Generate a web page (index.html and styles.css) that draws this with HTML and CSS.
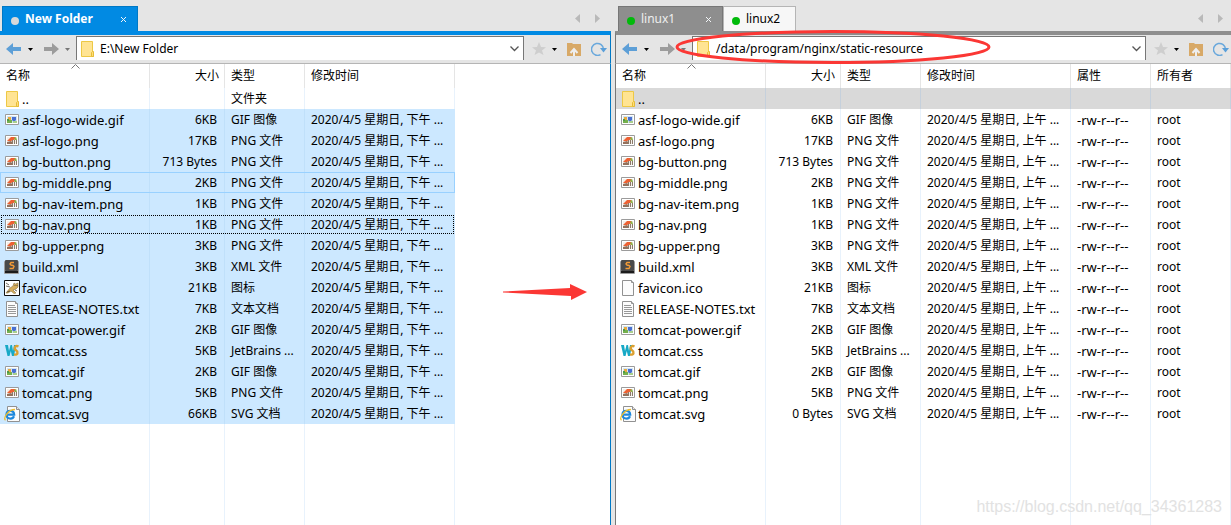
FILE: index.html
```html
<!DOCTYPE html>
<html lang="zh-CN">
<head>
<meta charset="utf-8">
<title>New Folder</title>
<link rel="stylesheet" href="styles.css">
</head>
<body>
<svg class="sprite" aria-hidden="true">
  <symbol id="folder" viewBox="-1 0 16 16"><path d="M1.500.5h11v12h1v3h-12z" fill="#ffe493" stroke="#edc845"/><path d="M11.500 15.500v-4l1-1h1v5z" fill="#ffdd78" stroke="#e6bd38"/></symbol>
  <symbol id="gif" viewBox="-1 0 16 16"><path d="M.5 2.500h13v10H.5z" fill="#fff" stroke="#9b9b9b"/><path d="M2 4h10v7H2z" fill="#cfe4f3"/><path d="M2 8h5v3H2z" fill="#76b04e"/><path d="M3 5h3v3H3z" fill="#e8a93c"/><path d="M2 7h2v2H2z" fill="#4d9a48"/><path d="M7 5h4v3l-2 2-2-2z" fill="#4a6fd0"/><path d="M8 9h4v2H8z" fill="#a9cf8c"/></symbol>
  <symbol id="png" viewBox="-1 0 16 16"><path d="M.5 2.500h13v10H.5z" fill="#fff" stroke="#9b9b9b"/><path d="M2 4h10v7H2z" fill="#f3eee8"/><path d="M2 8l4-4h4l1 2-5 2z" fill="#ed6032"/><path d="M2 9l4-1 1 1v2H2z" fill="#94705b"/><path d="M7 7h1v4H7zM9 7h1v4H9zM11 7h1v4h-1z" fill="#8a7a6a"/><path d="M9 5l2-1 1 3h-2z" fill="#8bb247"/></symbol>
  <symbol id="xml" viewBox="0 0 16 16"><rect x="0" y="2" width="15" height="13" rx="1" fill="#9c9c9c"/><rect x="1" y="1" width="13" height="11" rx="1" fill="#4a4a4a"/><path d="M1 12h13v2H1z" fill="#1c1c1c"/><path d="M10 3.500H7L6 5l1 1 2 .5 1 1-1 2H5.500" fill="none" stroke="#f49b36" stroke-width="1.400"/></symbol>
  <symbol id="cat" viewBox="0 0 16 16"><path d="M.5.5h15v15H.5z" fill="#fff" stroke="#111"/><path d="M2 13l4-5 3-2 1-3 1.500 1L14 3v4l-2 2-3 1 3 3-2 .5L7 11l-3 2z" fill="#d6ad5c" stroke="#8c7548" stroke-width=".6"/><path d="M2 3l3 2M2 6l4 1M3 12l3-1M10.500 5.500h1M12.500 5.500h1M13 11l-2-1" stroke="#4c463a" stroke-width=".8"/></symbol>
  <symbol id="blank" viewBox="-1 0 16 16"><path d="M1.500.5h9l2 2v13h-11z" fill="#fcfcfc" stroke="#919191"/><path d="M10.500.5v2h2" fill="#e7e7e7" stroke="#919191"/></symbol>
  <symbol id="text" viewBox="-1 0 16 16"><path d="M1.500.5h9l2 2v13h-11z" fill="#fcfcfc" stroke="#919191"/><path d="M10.500.5v2h2" fill="#e7e7e7" stroke="#919191"/><path d="M3 4.500h7M3 6.500h8M3 8.500h8M3 10.500h8M3 12.500h8" stroke="#999"/></symbol>
  <symbol id="css" viewBox="-1 0 16 16"><path d="M0 2h3l1 6 1.500-6H7l1 6 1-6h2L9 13H7L5.800 8 4.500 13h-2z" fill="#17a9c6"/><path d="M13.500 3.500C9.500 1.500 9 6 11 7.300S13.500 12.500 9 11.500" fill="none" stroke="#dba030" stroke-width="2.400"/></symbol>
  <symbol id="ie" viewBox="0 0 16 16"><path d="M3.500.5h9l3 3v12h-12z" fill="#fcfcfc" stroke="#919191"/><path d="M12.500.5v3h3" fill="#e7e7e7" stroke="#919191"/><path d="M10 10.300c-1.500 3.500-7.500 3-7.500-1.800s7.500-5 7.700.2H4" fill="none" stroke="#1e88dc" stroke-width="2.200"/><path d="M1.500 14.300C-1 12 4 3.500 11 3.500" fill="none" stroke="#f0bf2c" stroke-width="1.300"/></symbol>
  <symbol id="back" viewBox="0 0 16 14"><path d="M0 7l7-6v4h8v4H7v4z" fill="#5d9fd7"/></symbol>
  <symbol id="next" viewBox="0 0 16 14"><path d="M16 7L9 1v4H1v4h8v4z" fill="#9c9c9c"/></symbol>
  <symbol id="down" viewBox="0 0 5 3"><path d="M0 0h5L2.500 3z" fill="currentColor"/></symbol>
  <symbol id="star" viewBox="0 0 14 14"><path d="M7 0l2 5 5 .3-4 3.200L11.500 13 7 10.500 2.500 13 4 8.500 0 5.300 5 5z" fill="#cecece"/></symbol>
  <symbol id="up" viewBox="0 0 14 13"><path d="M0 0h5l1 1h8v12H0z" fill="#d8a967"/><path d="M3.500 10L7 6l3.500 4M7 7v6" fill="none" stroke="#eee" stroke-width="2"/></symbol>
  <symbol id="refresh" viewBox="0 0 16 14"><path d="M9.500 12.600A6 6 0 1 1 12.500 7" fill="none" stroke="#69a8dc" stroke-width="1.500"/><path d="M9 6h7l-3.500 4.500z" fill="#5a9fd9"/></symbol>
  <symbol id="close" viewBox="0 0 7 7"><path d="M1 1l5 5M6 1L1 6" fill="none" stroke="#f3f6f8"/></symbol>
  <symbol id="left" viewBox="0 0 5 9"><path d="M5 0v9L0 4.500z" fill="#b9b9b9"/></symbol>
  <symbol id="right" viewBox="0 0 5 9"><path d="M0 0v9l5-4.500z" fill="#b9b9b9"/></symbol>
  <symbol id="chevron" viewBox="0 0 9 6"><path d="M.5.5l4 4 4-4" fill="none" stroke="#555" stroke-width="1.300"/></symbol>
  <symbol id="sort" viewBox="0 0 9 5"><path d="M.5 4.500l4-4 4 4" fill="none" stroke="#777"/></symbol>
</svg>

<main class="panes">
<section class="pane local">
  <div class="tabs">
    <div class="tab current"><span class="dot"></span><button class="label">New Folder</button><button class="close" aria-label="Close"><svg><use href="#close"/></svg></button></div>
    <div class="scroll"><button aria-label="Previous tab"><svg><use href="#left"/></svg></button><button aria-label="Next tab"><svg><use href="#right"/></svg></button></div>
  </div>
  <div class="toolbar">
    <button class="nav" aria-label="Back"><svg><use href="#back"/></svg></button><button class="drop" aria-label="Back history"><svg><use href="#down"/></svg></button>
    <button class="nav" aria-label="Forward"><svg><use href="#next"/></svg></button><button class="drop faint" aria-label="Forward history"><svg><use href="#down"/></svg></button>
    <div class="address"><svg class="icon"><use href="#folder"/></svg><input type="text" aria-label="Local path" value="E:\New Folder"><button class="open" aria-label="Show paths"><svg><use href="#chevron"/></svg></button></div>
    <button class="star" aria-label="Bookmarks"><svg><use href="#star"/></svg></button><button class="drop" aria-label="Bookmark list"><svg><use href="#down"/></svg></button>
    <button class="up" aria-label="Parent folder"><svg><use href="#up"/></svg></button><button class="refresh" aria-label="Refresh"><svg><use href="#refresh"/></svg></button>
  </div>
  <div class="list">
  <table>
    <colgroup><col class="c-name"><col class="c-size"><col class="c-type"><col class="c-date"></colgroup>
    <thead><tr><th>名称<svg class="sort"><use href="#sort"/></svg></th><th class="num">大小</th><th>类型</th><th>修改时间</th></tr></thead>
    <tbody>
    <tr><td class="name"><svg class="icon"><use href="#folder"/></svg>..</td><td class="num"></td><td>文件夹</td><td></td></tr>
    <tr class="sel"><td class="name"><svg class="icon"><use href="#gif"/></svg>asf-logo-wide.gif</td><td class="num">6KB</td><td>GIF 图像</td><td>2020/4/5 星期日, 下午 ...</td></tr>
    <tr class="sel"><td class="name"><svg class="icon"><use href="#png"/></svg>asf-logo.png</td><td class="num">17KB</td><td>PNG 文件</td><td>2020/4/5 星期日, 下午 ...</td></tr>
    <tr class="sel"><td class="name"><svg class="icon"><use href="#png"/></svg>bg-button.png</td><td class="num">713 Bytes</td><td>PNG 文件</td><td>2020/4/5 星期日, 下午 ...</td></tr>
    <tr class="sel hover"><td class="name"><svg class="icon"><use href="#png"/></svg>bg-middle.png</td><td class="num">2KB</td><td>PNG 文件</td><td>2020/4/5 星期日, 下午 ...</td></tr>
    <tr class="sel"><td class="name"><svg class="icon"><use href="#png"/></svg>bg-nav-item.png</td><td class="num">1KB</td><td>PNG 文件</td><td>2020/4/5 星期日, 下午 ...</td></tr>
    <tr class="sel focus"><td class="name"><svg class="icon"><use href="#png"/></svg>bg-nav.png</td><td class="num">1KB</td><td>PNG 文件</td><td>2020/4/5 星期日, 下午 ...</td></tr>
    <tr class="sel"><td class="name"><svg class="icon"><use href="#png"/></svg>bg-upper.png</td><td class="num">3KB</td><td>PNG 文件</td><td>2020/4/5 星期日, 下午 ...</td></tr>
    <tr class="sel"><td class="name"><svg class="icon"><use href="#xml"/></svg>build.xml</td><td class="num">3KB</td><td>XML 文件</td><td>2020/4/5 星期日, 下午 ...</td></tr>
    <tr class="sel"><td class="name"><svg class="icon"><use href="#cat"/></svg>favicon.ico</td><td class="num">21KB</td><td>图标</td><td>2020/4/5 星期日, 下午 ...</td></tr>
    <tr class="sel"><td class="name"><svg class="icon"><use href="#text"/></svg>RELEASE-NOTES.txt</td><td class="num">7KB</td><td>文本文档</td><td>2020/4/5 星期日, 下午 ...</td></tr>
    <tr class="sel"><td class="name"><svg class="icon"><use href="#gif"/></svg>tomcat-power.gif</td><td class="num">2KB</td><td>GIF 图像</td><td>2020/4/5 星期日, 下午 ...</td></tr>
    <tr class="sel"><td class="name"><svg class="icon"><use href="#css"/></svg>tomcat.css</td><td class="num">5KB</td><td>JetBrains ...</td><td>2020/4/5 星期日, 下午 ...</td></tr>
    <tr class="sel"><td class="name"><svg class="icon"><use href="#gif"/></svg>tomcat.gif</td><td class="num">2KB</td><td>GIF 图像</td><td>2020/4/5 星期日, 下午 ...</td></tr>
    <tr class="sel"><td class="name"><svg class="icon"><use href="#png"/></svg>tomcat.png</td><td class="num">5KB</td><td>PNG 文件</td><td>2020/4/5 星期日, 下午 ...</td></tr>
    <tr class="sel"><td class="name"><svg class="icon"><use href="#ie"/></svg>tomcat.svg</td><td class="num">66KB</td><td>SVG 文档</td><td>2020/4/5 星期日, 下午 ...</td></tr>
    <tr class="rest"><td></td><td></td><td></td><td></td></tr>
    </tbody>
  </table>
  </div>
  <svg class="arrow" viewBox="0 0 84 18" aria-hidden="true"><path d="M0 8.500L67 5V1l17 8-16 8v-4L0 9.500z" fill="#fb3734"/></svg>
</section>

<section class="pane remote">
  <div class="tabs">
    <div class="tab current"><span class="dot"></span><button class="label">linux1</button><button class="close" aria-label="Close"><svg><use href="#close"/></svg></button></div>
    <div class="tab"><span class="dot"></span><button class="label">linux2</button></div>
    <div class="scroll"><button aria-label="Previous tab"><svg><use href="#left"/></svg></button><button aria-label="Next tab"><svg><use href="#right"/></svg></button></div>
  </div>
  <div class="toolbar">
    <button class="nav" aria-label="Back"><svg><use href="#back"/></svg></button><button class="drop" aria-label="Back history"><svg><use href="#down"/></svg></button>
    <button class="nav" aria-label="Forward"><svg><use href="#next"/></svg></button><button class="drop faint" aria-label="Forward history"><svg><use href="#down"/></svg></button>
    <div class="address"><svg class="icon"><use href="#folder"/></svg><input type="text" aria-label="Remote path" value="/data/program/nginx/static-resource"><button class="open" aria-label="Show paths"><svg><use href="#chevron"/></svg></button></div>
    <button class="star" aria-label="Bookmarks"><svg><use href="#star"/></svg></button><button class="drop" aria-label="Bookmark list"><svg><use href="#down"/></svg></button>
    <button class="up" aria-label="Parent folder"><svg><use href="#up"/></svg></button><button class="refresh" aria-label="Refresh"><svg><use href="#refresh"/></svg></button>
  </div>
  <div class="list">
  <table>
    <colgroup><col class="c-name"><col class="c-size"><col class="c-type"><col class="c-date"><col class="c-type"><col></colgroup>
    <thead><tr><th>名称<svg class="sort"><use href="#sort"/></svg></th><th class="num">大小</th><th>类型</th><th>修改时间</th><th>属性</th><th>所有者</th></tr></thead>
    <tbody>
    <tr class="parent"><td class="name"><svg class="icon"><use href="#folder"/></svg>..</td><td></td><td></td><td></td><td></td><td></td></tr>
    <tr><td class="name"><svg class="icon"><use href="#gif"/></svg>asf-logo-wide.gif</td><td class="num">6KB</td><td>GIF 图像</td><td>2020/4/5 星期日, 上午 ...</td><td class="mode">-rw-r--r--</td><td>root</td></tr>
    <tr><td class="name"><svg class="icon"><use href="#png"/></svg>asf-logo.png</td><td class="num">17KB</td><td>PNG 文件</td><td>2020/4/5 星期日, 上午 ...</td><td class="mode">-rw-r--r--</td><td>root</td></tr>
    <tr><td class="name"><svg class="icon"><use href="#png"/></svg>bg-button.png</td><td class="num">713 Bytes</td><td>PNG 文件</td><td>2020/4/5 星期日, 上午 ...</td><td class="mode">-rw-r--r--</td><td>root</td></tr>
    <tr><td class="name"><svg class="icon"><use href="#png"/></svg>bg-middle.png</td><td class="num">2KB</td><td>PNG 文件</td><td>2020/4/5 星期日, 上午 ...</td><td class="mode">-rw-r--r--</td><td>root</td></tr>
    <tr><td class="name"><svg class="icon"><use href="#png"/></svg>bg-nav-item.png</td><td class="num">1KB</td><td>PNG 文件</td><td>2020/4/5 星期日, 上午 ...</td><td class="mode">-rw-r--r--</td><td>root</td></tr>
    <tr><td class="name"><svg class="icon"><use href="#png"/></svg>bg-nav.png</td><td class="num">1KB</td><td>PNG 文件</td><td>2020/4/5 星期日, 上午 ...</td><td class="mode">-rw-r--r--</td><td>root</td></tr>
    <tr><td class="name"><svg class="icon"><use href="#png"/></svg>bg-upper.png</td><td class="num">3KB</td><td>PNG 文件</td><td>2020/4/5 星期日, 上午 ...</td><td class="mode">-rw-r--r--</td><td>root</td></tr>
    <tr><td class="name"><svg class="icon"><use href="#xml"/></svg>build.xml</td><td class="num">3KB</td><td>XML 文件</td><td>2020/4/5 星期日, 上午 ...</td><td class="mode">-rw-r--r--</td><td>root</td></tr>
    <tr><td class="name"><svg class="icon"><use href="#blank"/></svg>favicon.ico</td><td class="num">21KB</td><td>图标</td><td>2020/4/5 星期日, 上午 ...</td><td class="mode">-rw-r--r--</td><td>root</td></tr>
    <tr><td class="name"><svg class="icon"><use href="#text"/></svg>RELEASE-NOTES.txt</td><td class="num">7KB</td><td>文本文档</td><td>2020/4/5 星期日, 上午 ...</td><td class="mode">-rw-r--r--</td><td>root</td></tr>
    <tr><td class="name"><svg class="icon"><use href="#gif"/></svg>tomcat-power.gif</td><td class="num">2KB</td><td>GIF 图像</td><td>2020/4/5 星期日, 上午 ...</td><td class="mode">-rw-r--r--</td><td>root</td></tr>
    <tr><td class="name"><svg class="icon"><use href="#css"/></svg>tomcat.css</td><td class="num">5KB</td><td>JetBrains ...</td><td>2020/4/5 星期日, 上午 ...</td><td class="mode">-rw-r--r--</td><td>root</td></tr>
    <tr><td class="name"><svg class="icon"><use href="#gif"/></svg>tomcat.gif</td><td class="num">2KB</td><td>GIF 图像</td><td>2020/4/5 星期日, 上午 ...</td><td class="mode">-rw-r--r--</td><td>root</td></tr>
    <tr><td class="name"><svg class="icon"><use href="#png"/></svg>tomcat.png</td><td class="num">5KB</td><td>PNG 文件</td><td>2020/4/5 星期日, 上午 ...</td><td class="mode">-rw-r--r--</td><td>root</td></tr>
    <tr><td class="name"><svg class="icon"><use href="#ie"/></svg>tomcat.svg</td><td class="num">0 Bytes</td><td>SVG 文档</td><td>2020/4/5 星期日, 上午 ...</td><td class="mode">-rw-r--r--</td><td>root</td></tr>
    <tr class="rest"><td></td><td></td><td></td><td></td><td></td><td></td></tr>
    </tbody>
  </table>
  </div>
  <svg class="ring" viewBox="0 0 316 36" aria-hidden="true"><ellipse cx="158" cy="18" rx="156" ry="15.500" fill="none" stroke="#fb3734" stroke-width="3"/></svg>
  <div class="watermark">https://blog.csdn.net/qq_34361283</div>
</section>
</main>
</body>
</html>
```
FILE: styles.css
```css
* { box-sizing: border-box; }
body { margin: 0; background: #e5e5e5; color: #000; font: 12px/16px "Noto Sans", "Noto Sans CJK SC", sans-serif; }
svg { display: block; flex: none; }
button { border: 0; padding: 0; background: none; color: inherit; font: inherit; }
.sprite { display: none; }

.panes { display: grid; grid-template-columns: 611fr 616fr; gap: 4px; height: 100vh; }
.pane { position: relative; display: flex; flex-direction: column; min-width: 0; }

.tabs { display: flex; align-items: flex-end; height: 31px; padding-left: 2px; }
.tab { display: flex; align-items: center; height: 25px; padding: 0 10px 0 8px; background: #f7f7f7; border: 1px solid #b5b5b5; border-bottom: 0; }
.local .tab { width: 136px; }
.remote .tab { width: 73px; }
.remote .tabs { padding-left: 3px; }
.tab .label { margin-left: 6px; }
.tab .close { margin-left: auto; }
.tab svg { width: 7px; height: 7px; }
.dot { width: 8px; height: 8px; margin-top: 3px; border-radius: 50%; background: #00ba0a; }
.local .tab.current { background: #018ae3; border-color: #0078c5; color: #fff; font-weight: bold; }
.local .dot { background: #d9d9d9; }
.remote .tab.current { width: 105px; background: #8e8e8e; border-color: #777; color: #eee; }
.scroll { display: flex; gap: 15px; margin-left: auto; padding: 0 11px 8px 0; }
.remote .scroll { padding-right: 8px; }
.scroll svg { width: 5px; height: 9px; }

.toolbar { display: flex; align-items: center; height: 33px; padding-right: 3px; padding-left: 6px; border-top: 4px solid #018ae3; border-bottom: 1px solid #b5b5b5; }
.local .toolbar, .local .list { border-right: 1px solid #0078c5; }
.remote .toolbar { border-top-color: #8e8e8e; padding-right: 2px; }
.remote .toolbar, .remote .list { border-left: 1px solid #777; }
.nav svg { width: 16px; height: 14px; }
.drop { margin-left: 6px; }
.drop svg { width: 5px; height: 3px; }
.drop + .nav { margin-left: 10px; }
.faint { color: #777; }
.address { display: flex; flex: 1; align-self: flex-start; min-width: 0; height: 24px; margin: 1px 8px 0 6px; padding: 0 4px 0 2px; align-items: center; background: #fff; border: 1px solid #777; border-bottom: 0; }
.address input { flex: 1; min-width: 0; height: 20px; margin-left: 5px; padding: 0; border: 0; outline: 0; background: none; color: #000; font: inherit; }
.open svg { width: 9px; height: 6px; }
.star svg { width: 14px; height: 14px; }
.up { margin-left: 10px; }
.up svg { width: 14px; height: 13px; }
.refresh { margin-left: 10px; }
.refresh svg { width: 16px; height: 14px; }

.list { flex: 1; min-height: 0; background: #fff; overflow: hidden; }
table { height: 100%; table-layout: fixed; border-collapse: separate; border-spacing: 0; }
.local table { width: 455px; }
.remote table { width: 100%; }
.c-name, .c-date { width: 150px; }
.c-size { width: 75px; }
.c-type { width: 80px; }
th, td { height: 21px; padding: 0 0 0 6px; border-right: 1px solid #e8f2fc; text-align: left; font-weight: normal; white-space: nowrap; overflow: hidden; }
th { position: relative; height: 24px; border-color: #e5e5e5; }
.sort { position: absolute; top: 0; left: 71px; width: 9px; height: 5px; }
.num { padding: 0 7px 0 0; text-align: right; }
th.num { padding-right: 5px; }
.name { padding-left: 22px; font-size: 13px; }
.mode { font-size: 13px; }
.name .icon { float: left; margin-left: -18px; }
.icon { width: 16px; height: 16px; }
.sel { background: #cce8ff; }
.sel td { border-color: #c0e0fa; }
.sel td:last-child { border-color: #cce8ff; }
.hover { outline: 1px solid #99d1ff; outline-offset: -1px; }
.focus { outline: 1px dotted #000; outline-offset: -2px; }
.parent { background: #d9d9d9; }
.parent td { border-color: #c5d0dc; }
.rest td { height: auto; }

.arrow { position: absolute; top: 283px; left: 503px; width: 84px; height: 18px; }
.ring { position: absolute; top: 29px; left: 60px; width: 316px; height: 36px; }
.watermark { position: absolute; right: 9px; bottom: 8px; color: #e2e2e2; font: 16px/20px "Liberation Sans", sans-serif; }
```
